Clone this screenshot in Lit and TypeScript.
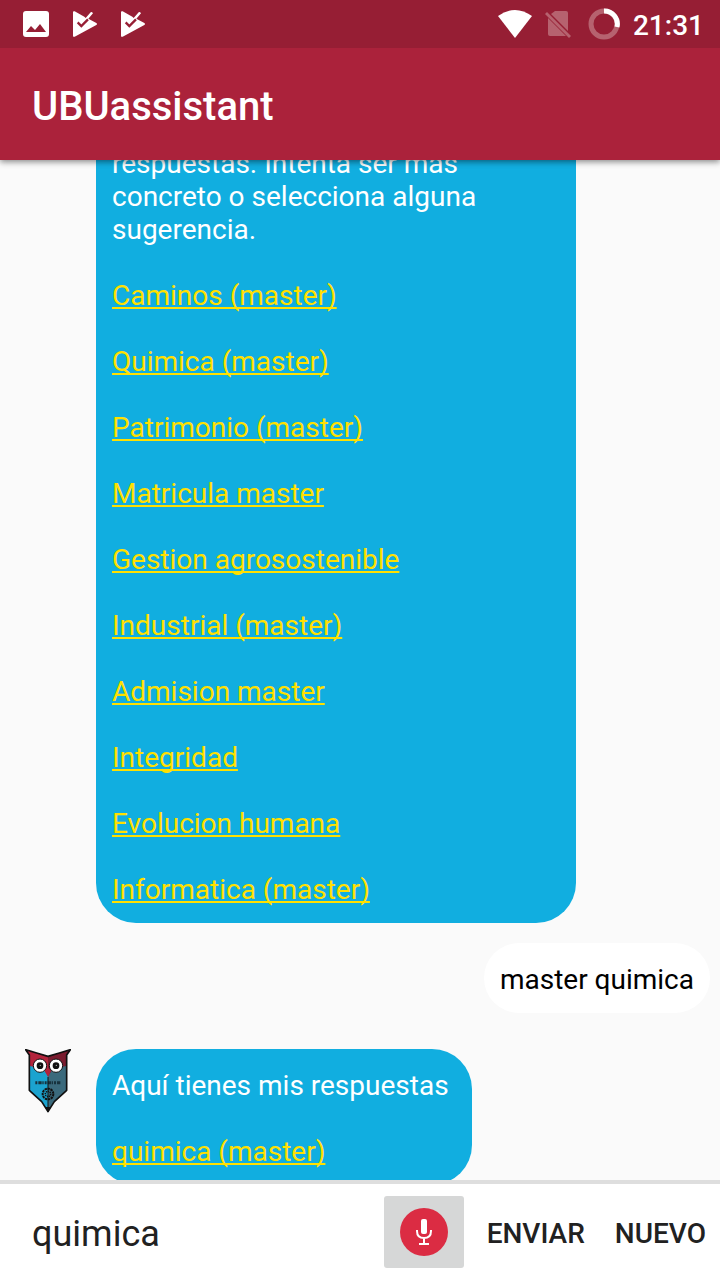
import { LitElement, html, css, svg } from "lit";
import { customElement, property, state } from "lit/decorators.js";

const playCheckIcon = () => html`
  <svg class="icon play" viewBox="0 0 72 78" aria-hidden="true">
    <path fill="#fff" d="M0 4Q0-1 5 1L34 17L38 21L53 4Q56 1 60 7L46 23L70 36Q74 39 70 42L5 77Q0 79 0 74Z" />
    <path fill="none" stroke="#961e34" stroke-width="7" d="M14 34L25 45L45 25" />
  </svg>
`;

@customElement("status-bar")
class StatusBar extends LitElement {
  @property() time = "21:31";

  static styles = css`
    :host {
      display: flex;
      align-items: center;
      justify-content: space-between;
      height: 48px;
      padding: 0 16px 0 23px;
      background: #961e34;
      color: #fff;
      font: 500 28px/44px Roboto, sans-serif;
    }
    .group { display: flex; align-items: center; gap: 24px; }
    .right { gap: 13px; }
    .icon { display: block; flex: none; }
    .photo { width: 26px; height: 26px; }
    .play { width: 24px; height: 26px; }
    .wifi { width: 34px; height: 28px; }
    .sim { width: 26px; height: 28px; }
    .battery { width: 32px; height: 32px; margin-left: 4px; }
    .time { padding-top: 4px; }
  `;

  render() {
    return html`
      <div class="group">
        <svg class="icon photo" viewBox="0 0 26 26" aria-hidden="true">
          <rect width="26" height="26" rx="3" fill="#fff" />
          <path fill="#961e34" d="M3 21L8 15L12 19L17 13L23 21Z" />
        </svg>
        ${playCheckIcon()} ${playCheckIcon()}
      </div>
      <div class="group right">
        <svg class="icon wifi" viewBox="0 0 34 28" aria-hidden="true">
          <path fill="#fff" d="M0 6Q17-6 34 6L17 28Z" />
        </svg>
        <svg class="icon sim" viewBox="0 0 26 28" aria-hidden="true">
          <g fill="#b6626f">
            <path d="M10 1H21Q23 1 23 3V21L6 4Z" />
            <path d="M3 8L21 26H5Q3 26 3 24Z" />
            <path d="M0 4L2 2L26 26L24 28Z" />
          </g>
        </svg>
        <svg class="icon battery" viewBox="0 0 32 32" aria-hidden="true">
          <circle cx="16" cy="16" r="13" fill="none" stroke="#b6626f" stroke-width="5" />
          <path d="M16 3A13 13 0 0 1 29 19" fill="none" stroke="#fff" stroke-width="5" />
        </svg>
        <span class="time">${this.time}</span>
      </div>
    `;
  }
}

@customElement("owl-avatar")
class OwlAvatar extends LitElement {
  static styles = css`
    :host { display: block; }
    .owl { display: block; width: 46px; height: 64px; }
  `;

  private eye(cx: number) {
    return svg`
      <circle cx=${cx} cy="50" r="20" fill="#fff" stroke="#111" stroke-width="3" />
      <circle cx=${cx} cy="50" r="10" fill="#111" />
      <circle cx=${cx + 1} cy="49" r="2" fill="#bbb" />
    `;
  }

  render() {
    return html`
      <svg class="owl" viewBox="0 0 138 192" role="img" aria-label="UBUassistant">
        <path fill="#1ba3cf" d="M13 40H69V188L50 158L13 124Z" />
        <path fill="#3b6a7c" d="M69 40H125V124L88 158L69 188Z" />
        <path fill="#b3243c" d="M2 2L35 12L69 22V82L56 62L13 50V18Z" />
        <path fill="#7a1c2f" d="M136 2L103 12L69 22V82L82 62L125 50V18Z" />
        <path fill="none" stroke="#111" stroke-width="5" stroke-linejoin="round"
          d="M2 2L35 12L69 22L103 12L136 2L125 18V124L88 158L69 188L50 158L13 124V18Z" />
        ${this.eye(45)} ${this.eye(93)}
        <path fill="#b3243c" d="M60 66L69 56L78 66L69 84Z" />
        <path fill="none" stroke="#17323d" stroke-width="9" stroke-dasharray="6 3 10 2 4 3" d="M31 101H108" />
        <path stroke="#111" stroke-width="3" d="M69 84V188" />
        <circle cx="69" cy="135" r="16" fill="none" stroke="#111" stroke-width="6" stroke-dasharray="7 2" />
        <circle cx="69" cy="135" r="8" fill="none" stroke="#111" stroke-width="5" stroke-dasharray="4 2" />
        <path fill="#111" d="M60 174H78L69 190Z" />
      </svg>
    `;
  }
}

interface Message {
  from: "bot" | "user";
  text: string;
  links?: string[];
  avatar?: boolean;
  continued?: boolean;
}

@customElement("chat-message")
class ChatMessage extends LitElement {
  @property({ attribute: false }) message!: Message;

  static styles = css`
    :host { display: block; font: 28px/33px Roboto, sans-serif; }
    .row { display: grid; grid-template-columns: 96px minmax(0, 1fr); }
    .avatar { padding-left: 25px; }
    .bubble {
      box-sizing: border-box;
      width: fit-content;
      max-width: 480px;
      padding: 20px 16px 17px;
      border-radius: 40px;
      background: #11aee0;
      color: #fff;
    }
    .continued { border-top-left-radius: 0; border-top-right-radius: 0; }
    .text { margin: 0; white-space: pre-wrap; }
    .links { list-style: none; margin: 0; padding: 0; }
    .item { padding-top: 33px; }
    .link {
      color: #ffe000;
      text-decoration: underline;
      text-decoration-thickness: 2px;
      text-underline-offset: 2px;
      text-decoration-skip-ink: none;
    }
    .user { display: flex; justify-content: flex-end; padding: 20px 10px 36px; }
    .user .bubble { background: #fff; color: #000; }
  `;

  render() {
    const { from, text, links = [], avatar, continued } = this.message;
    if (from === "user") {
      return html`<div class="user"><div class="bubble"><p class="text">${text}</p></div></div>`;
    }
    return html`
      <div class="row">
        <div class="avatar">${avatar ? html`<owl-avatar></owl-avatar>` : ""}</div>
        <div class=${continued ? "bubble continued" : "bubble"}>
          <p class="text">${text}</p>
          <ul class="links">
            ${links.map((l) => html`<li class="item"><a class="link" href="#">${l}</a></li>`)}
          </ul>
        </div>
      </div>
    `;
  }
}

@customElement("message-composer")
class MessageComposer extends LitElement {
  @state() private draft = "quimica";

  static styles = css`
    :host { display: block; }
    .bar {
      display: flex;
      align-items: center;
      height: 96px;
      padding-right: 14px;
      border-top: 4px solid #dedede;
      background: #fff;
      font-family: Roboto, sans-serif;
    }
    .field {
      flex: 1;
      min-width: 0;
      height: 72px;
      padding: 4px 16px 0 32px;
      box-sizing: border-box;
      border: 0;
      outline: 0;
      background: none;
      color: #212121;
      font: 36px/42px Roboto, sans-serif;
    }
    .mic {
      display: grid;
      place-items: center;
      width: 80px;
      height: 72px;
      margin-right: 23px;
      padding: 0;
      border: 0;
      border-radius: 3px;
      background: #d6d7d7;
    }
    .mic-icon { display: block; width: 48px; height: 48px; }
    .action {
      padding: 2px 0 0;
      border: 0;
      background: none;
      color: #212121;
      font: 500 28px/33px Roboto, sans-serif;
    }
    .action + .action { margin-left: 30px; }
  `;

  render() {
    return html`
      <form class="bar" @submit=${(e: Event) => e.preventDefault()}>
        <input
          class="field"
          type="text"
          aria-label="Mensaje"
          .value=${this.draft}
          @input=${(e: Event) => (this.draft = (e.target as HTMLInputElement).value)}
        />
        <button class="mic" type="button" aria-label="Hablar">
          <svg class="mic-icon" viewBox="0 0 48 48" aria-hidden="true">
            <circle cx="24" cy="24" r="24" fill="#db2c43" />
            <rect x="21" y="11" width="6" height="15" rx="2" fill="#fff" />
            <path fill="none" stroke="#fff" stroke-width="2" d="M17 22V23Q17 30 24 30Q31 30 31 23V22M24 30V36M19 36H29" />
          </svg>
        </button>
        <button class="action" type="submit">ENVIAR</button>
        <button class="action" type="button">NUEVO</button>
      </form>
    `;
  }
}

@customElement("app-root")
class AppRoot extends LitElement {
  private messages: Message[] = [
    {
      from: "bot",
      continued: true,
      text: "respuestas. Intenta ser más concreto o selecciona alguna sugerencia.",
      links: [
        "Caminos (master)",
        "Quimica (master)",
        "Patrimonio (master)",
        "Matricula master",
        "Gestion agrosostenible",
        "Industrial (master)",
        "Admision master",
        "Integridad",
        "Evolucion humana",
        "Informatica (master)",
      ],
    },
    { from: "user", text: "master quimica" },
    { from: "bot", text: "Aquí tienes mis respuestas\u00a0", links: ["quimica (master)"], avatar: true },
  ];

  static styles = css`
    :host {
      display: flex;
      flex-direction: column;
      height: 100vh;
      overflow: hidden;
      background: #fafafa;
      font-family: Roboto, sans-serif;
    }
    .head { flex: none; z-index: 1; box-shadow: 0 2px 6px rgba(0, 0, 0, 0.45); }
    .title {
      margin: 0;
      padding: 6px 32px 0;
      background: #ab223b;
      color: #fff;
      font: 500 40px/106px Roboto, sans-serif;
    }
    .chat {
      display: flex;
      flex: 1;
      flex-direction: column;
      justify-content: flex-end;
      min-height: 0;
    }
    .message { flex: none; }
    .composer { flex: none; z-index: 1; margin-top: -5px; }
  `;

  render() {
    return html`
      <header class="head">
        <status-bar></status-bar>
        <h1 class="title">UBUassistant</h1>
      </header>
      <main class="chat">
        ${this.messages.map((m) => html`<chat-message class="message" .message=${m}></chat-message>`)}
      </main>
      <message-composer class="composer"></message-composer>
    `;
  }
}
